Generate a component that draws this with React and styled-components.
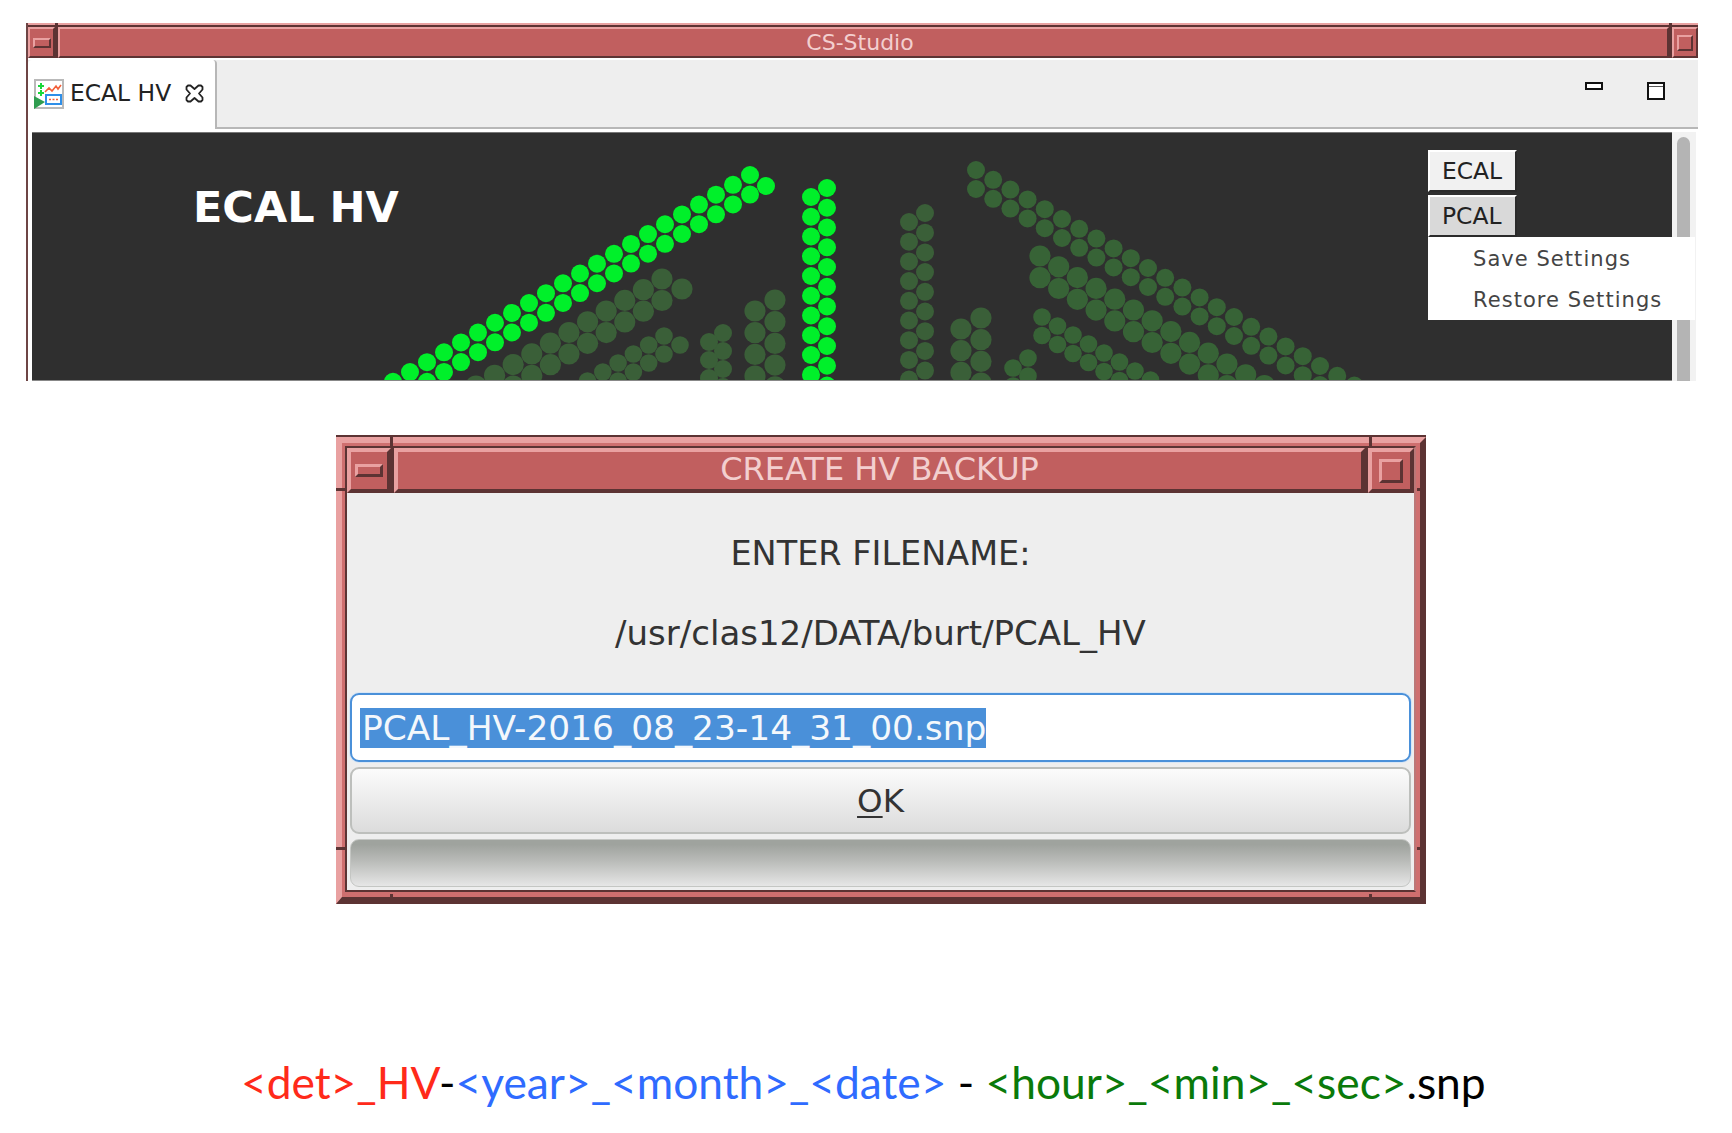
import React from "react";
import styled, { createGlobalStyle } from "styled-components";

const GlobalStyle = createGlobalStyle`
  html, body {
    margin: 0;
    padding: 0;
    background: #fff;
  }
`;

const LIGHT = "#e9a1a1";
const MAIN = "#c15f5f";
const DARK = "#5c3333";
const UI_FONT = `"DejaVu Sans", "Liberation Sans", sans-serif`;

const Page = styled.div`
  width: 1732px;
  height: 1133px;
  padding-top: 23px;
  box-sizing: border-box;
  overflow: hidden;
  font-family: ${UI_FONT};
`;

/* ---- top window ---- */

const TopWindow = styled.div`
  position: relative;
  width: 1672px;
  height: 358px;
  margin-left: 26px;
  box-sizing: border-box;
  display: flex;
  flex-direction: column;
  border-left: 2px solid #6e4545;
`;

const TopBar = styled.div`
  display: flex;
  height: 35px;
  box-sizing: border-box;
  padding-top: 4px;
  background: ${DARK};
  box-shadow: inset 0 2px 0 ${LIGHT};
  margin-bottom: 2px;
`;

const BarButton = styled.div`
  width: ${(p) => p.$width}px;
  flex: none;
  box-sizing: border-box;
  display: flex;
  align-items: center;
  justify-content: center;
  background: ${MAIN};
  border-style: solid;
  border-width: ${(p) => p.$bevel}px;
  border-color: ${LIGHT} ${DARK} ${DARK} ${LIGHT};
`;

const BarTitle = styled.div`
  flex: 1;
  margin-left: ${(p) => p.$gap}px;
  margin-right: ${(p) => p.$gap}px;
  box-sizing: border-box;
  display: flex;
  align-items: center;
  justify-content: center;
  background: ${MAIN};
  color: #f3cfcf;
  font-size: ${(p) => p.$size}px;
  padding: 0 ${(p) => p.$nudgeX || 0}px ${(p) => p.$nudgeY || 0}px 0;
  border-style: solid;
  border-width: ${(p) => p.$bevel}px;
  border-color: ${LIGHT} ${DARK} ${DARK} ${LIGHT};
`;

const MinGlyph = styled.div`
  width: ${(p) => p.$w}px;
  height: ${(p) => p.$h}px;
  box-sizing: border-box;
  border-style: solid;
  border-width: ${(p) => p.$t}px;
  border-color: ${LIGHT} ${DARK} ${DARK} ${LIGHT};
`;

const TabStrip = styled.div`
  height: 69px;
  flex: none;
  display: flex;
  background: #eeeeee;
  border-bottom: 2px solid #b7b7b7;
  box-sizing: border-box;
`;

const Tab = styled.div`
  width: 189px;
  height: 69px;
  flex: none;
  box-sizing: border-box;
  padding: 18px 0 0 6px;
  display: flex;
  gap: 6px;
  background: #fff;
  border-right: 2px solid #b7b7b7;
  border-radius: 4px 4px 0 0;
  font-size: 23.4px;
  color: #222;
`;

const TabLabel = styled.span`
  line-height: 30px;
  width: 109px;
  white-space: nowrap;
`;

const StripTools = styled.div`
  margin-left: auto;
  display: flex;
  align-items: flex-start;
  gap: 44px;
  padding: 22px 33px 0 0;
`;

const MinimizeIcon = styled.div`
  width: 18px;
  height: 8px;
  box-sizing: border-box;
  border: 2px solid #111;
  background: #fff;
`;

const MaximizeIcon = styled.div`
  width: 18px;
  height: 18px;
  box-sizing: border-box;
  border: 2px solid #111;
  background: linear-gradient(#fff 2px, #555 2px, #555 3px, #fff 3px);
`;

const Body = styled.div`
  position: relative;
  flex: 1;
  min-height: 0;
  display: flex;
  padding: 3px 2px 0 4px;
  background: #fff;
`;

const Canvas = styled.div`
  position: relative;
  flex: 1;
  background: #2f2f2f;
  border-top: 1px solid #777;
  border-bottom: 1px solid #888;
  overflow: hidden;
`;

const DotField = styled.svg`
  display: block;
`;

const Heading = styled.h1`
  position: absolute;
  left: 161px;
  top: 49px;
  margin: 0;
  color: #fff;
  font-size: 43px;
  line-height: 50px;
  font-weight: 700;
`;

const ScrollTrack = styled.div`
  width: 24px;
  flex: none;
  background: #f2f2f2;
  padding: 5px 6px 0 5px;
  box-sizing: border-box;
`;

const ScrollThumb = styled.div`
  height: 100%;
  background: #b4b4b4;
  border-radius: 7px 7px 0 0;
`;

const Controls = styled.div`
  position: absolute;
  left: 1400px;
  top: 21px;
  width: 267px;
  display: flex;
  flex-direction: column;
  gap: 3px;
`;

const DisplayButton = styled.div`
  width: 89px;
  height: 42px;
  box-sizing: border-box;
  display: flex;
  align-items: center;
  padding-left: 12px;
  font-size: 23.4px;
  color: #222;
  background: ${(p) => (p.$active ? "#d9d9d9" : "#f1f1f1")};
  border-style: solid;
  border-width: 2px;
  border-color: #fff #2a2a2a #2a2a2a #fff;
`;

const ContextMenu = styled.div`
  margin-top: -3px;
  height: 83px;
  box-sizing: border-box;
  padding: 2px 0 0 45px;
  display: flex;
  flex-direction: column;
  justify-content: center;
  gap: 11px;
  background: #fff;
  font-size: 21px;
  letter-spacing: 1.05px;
  color: #444;
`;

const MenuItem = styled.div`
  line-height: 30px;
`;

/* ---- dialog ---- */

const DialogFrame = styled.div`
  position: relative;
  width: 1090px;
  height: 467px;
  margin: 56px 0 0 336px;
  box-sizing: border-box;
  border-style: solid;
  border-width: 6px 6px 7px 6px;
  border-color: ${LIGHT} ${DARK} ${DARK} ${LIGHT};
  background: #cf6f6f;
  box-shadow: 0 -2px 0 ${DARK};
  padding: 3px 4px 5px 3px;
  display: flex;
`;

const DialogInner = styled.div`
  flex: 1;
  min-width: 0;
  display: flex;
  flex-direction: column;
  border-style: solid;
  border-width: 2px;
  border-color: ${DARK} #b77 ${DARK} ${DARK};
  background: #eeeeee;
`;

const DialogBar = styled.div`
  height: 45px;
  flex: none;
  display: flex;
  background: ${DARK};
`;

const Tick = styled.i`
  position: absolute;
  background: ${DARK};
  width: ${(p) => p.$w}px;
  height: ${(p) => p.$h}px;
  left: ${(p) => p.$x}px;
  top: ${(p) => p.$y}px;
`;

const DialogBody = styled.div`
  flex: 1;
  display: flex;
  flex-direction: column;
  padding: 0 3px 3px 3px;
  text-align: center;
  color: #333;
`;

const PromptLine = styled.div`
  font-size: ${(p) => p.$size}px;
  line-height: 40px;
  margin-top: ${(p) => p.$top}px;
  white-space: nowrap;
`;

const FileInput = styled.div`
  margin-top: 40px;
  height: 69px;
  flex: none;
  box-sizing: border-box;
  border: 2px solid #4a90d9;
  border-radius: 9px;
  background: #fff;
  box-shadow: 0 0 0 1px #d8e6f5;
  display: flex;
  align-items: center;
  padding-left: 8px;
  font-size: 34.4px;
  text-align: left;
`;

const Selected = styled.span`
  background: #4a90d9;
  color: #f4f8fc;
  line-height: 40px;
  white-space: nowrap;
  padding-left: 2px;
`;

const OkButton = styled.div`
  margin-top: 5px;
  height: 67px;
  flex: none;
  box-sizing: border-box;
  border: 2px solid #bdbfbc;
  border-radius: 9px;
  background: linear-gradient(#fbfbfb, #dcdcdc);
  display: flex;
  align-items: center;
  justify-content: center;
  font-size: 32.5px;
`;

const Mnemonic = styled.span`
  text-decoration: underline;
  text-underline-offset: 4px;
  text-decoration-thickness: 2px;
`;

const EmptyBar = styled.div`
  margin-top: 5px;
  height: 48px;
  flex: none;
  box-sizing: border-box;
  border: 1px solid #c4c6c3;
  border-radius: 9px;
  background: linear-gradient(#9fa39e 10%, #b9bbb8 45%, #e6e6e6);
`;

/* ---- caption ---- */

const Caption = styled.div`
  margin: 152px 0 0 241px;
  font-family: Lato, "Open Sans", sans-serif;
  font-size: 44.3px;
  line-height: 52px;
  white-space: pre;
  color: #000;
`;

const Part = styled.span`
  color: ${(p) => p.$color};
`;

/* ---- drawings ---- */

const BRIGHT = "#00f02a";
const DIM = "#3a5f38";
const DIM2 = "#376336";

// pairs of dots walking along a diagonal
function diagonal(x, y, dx, dy, gap, count) {
  const out = [];
  for (let i = 0; i < count; i++) {
    out.push([x + dx * i, y + dy * i]);
    out.push([x + dx * i, y + dy * i + gap]);
  }
  return out;
}

function column(x, y, step, stop = 395) {
  const out = [];
  for (let cy = y; cy < stop; cy += step) out.push([x, cy]);
  return out;
}

const GROUPS = [
  { fill: BRIGHT, r: 9, dots: [...diagonal(750, 175, -17, 9.85, 19.6, 23), [766, 186]] },
  { fill: BRIGHT, r: 9, dots: [...column(827, 188, 19.75), ...column(811, 197, 19.75)] },
  { fill: DIM, r: 10.6, dots: [...diagonal(662, 279, -18.6, 10.7, 21.5, 12), [682, 289]] },
  { fill: DIM, r: 8.8, dots: [...diagonal(664, 336, -15.3, 9, 18, 7), [680, 345]] },
  { fill: DIM, r: 9, dots: [...column(723, 333, 18), ...column(709, 342, 18)] },
  { fill: DIM, r: 10.6, dots: [...column(775, 300, 21.7), ...column(755, 311, 21.7)] },
  { fill: DIM, r: 9, dots: [...column(925, 213, 19.7), ...column(909, 222, 19.7)] },
  { fill: DIM, r: 10.6, dots: [...column(981, 318, 21.7), ...column(961, 329, 21.7)] },
  { fill: DIM2, r: 9, dots: diagonal(976, 170, 17.2, 9.8, 19, 24) },
  { fill: DIM2, r: 10.6, dots: diagonal(1040, 256, 18.7, 10.8, 21.7, 13) },
  { fill: DIM2, r: 8.8, dots: diagonal(1042, 317, 15.5, 9, 18.5, 8) },
  { fill: DIM2, r: 8.8, dots: [...column(1028, 358, 18), ...column(1013, 368, 18)] },
];

function Dots() {
  return (
    <DotField width="1640" height="247" viewBox="32 133 1640 247">
      {GROUPS.map((g, gi) =>
        g.dots.map(([cx, cy], i) => (
          <circle key={`${gi}-${i}`} cx={cx} cy={cy} r={g.r} fill={g.fill} />
        ))
      )}
    </DotField>
  );
}

function TabIcon() {
  return (
    <svg width="30" height="30" viewBox="0 0 30 30" style={{ flex: "none", marginTop: 1 }}>
      <rect x="1" y="1" width="28" height="28" fill="#fff" stroke="#b9b9b9" strokeWidth="2" />
      <path d="M7 4v6M4 7h6M7 11v6M4 14h6" stroke="#19d83a" strokeWidth="2" />
      <path d="M11 13l4-4 3 3 4-5 2 3 3-4" fill="none" stroke="#f2603a" strokeWidth="1.6" />
      <rect x="12" y="16" width="15" height="9" fill="#fff" stroke="#2f8fe8" strokeWidth="2" />
      <path d="M15 20.500h2M18.500 20.500h2M22 20.500h2" stroke="#f2603a" strokeWidth="1.6" />
      <path d="M0 17l11 6-11 7z" fill="#2f9c4f" />
    </svg>
  );
}

function CloseIcon() {
  return (
    <svg width="19" height="19" viewBox="0 0 19 19" style={{ flex: "none", marginTop: 6 }}>
      <path
        d="M3 1.500h2.500L9.500 5 13.500 1.500H16L17.500 3v2.500L14 9.500l3.500 4V16L16 17.500h-2.500L9.500 14l-4 3.500H3L1.500 16v-2.500L5 9.500 1.500 5.500V3z"
        fill="#fff"
        stroke="#222"
        strokeWidth="1.800"
        strokeLinejoin="round"
      />
    </svg>
  );
}

export default function App() {
  return (
    <>
      <GlobalStyle />
      <Page>
        <TopWindow>
          <Tick $x={27} $y={0} $w={3} $h={8} />
          <Tick $x={1641} $y={0} $w={3} $h={8} />
          <TopBar>
            <BarButton $width={27} $bevel={2}>
              <MinGlyph $w={18} $h={10} $t={2} />
            </BarButton>
            <BarTitle $gap={3} $size={22} $bevel={2} $nudgeX={7}>
              CS-Studio
            </BarTitle>
            <BarButton $width={26} $bevel={2}>
              <MinGlyph $w={16} $h={16} $t={2} />
            </BarButton>
          </TopBar>
          <TabStrip>
            <Tab>
              <TabIcon />
              <TabLabel>ECAL HV</TabLabel>
              <CloseIcon />
            </Tab>
            <StripTools>
              <MinimizeIcon />
              <MaximizeIcon />
            </StripTools>
          </TabStrip>
          <Body>
            <Canvas>
              <Dots />
              <Heading>ECAL HV</Heading>
            </Canvas>
            <ScrollTrack>
              <ScrollThumb />
            </ScrollTrack>
            <Controls>
              <DisplayButton>ECAL</DisplayButton>
              <DisplayButton $active>PCAL</DisplayButton>
              <ContextMenu>
                <MenuItem>Save Settings</MenuItem>
                <MenuItem>Restore Settings</MenuItem>
              </ContextMenu>
            </Controls>
          </Body>
        </TopWindow>

        <DialogFrame>
          <Tick $x={48} $y={-6} $w={3} $h={9} />
          <Tick $x={1027} $y={-6} $w={3} $h={9} />
          <Tick $x={-6} $y={45} $w={9} $h={3} />
          <Tick $x={1075} $y={45} $w={9} $h={3} />
          <Tick $x={-6} $y={404} $w={9} $h={3} />
          <Tick $x={1075} $y={404} $w={9} $h={3} />
          <Tick $x={48} $y={451} $w={3} $h={8} />
          <Tick $x={1027} $y={451} $w={3} $h={8} />
          <DialogInner>
            <DialogBar>
              <BarButton $width={44} $bevel={4}>
                <MinGlyph $w={28} $h={13} $t={3} />
              </BarButton>
              <BarTitle $gap={3} $size={32} $bevel={4} $nudgeY={4}>
                CREATE HV BACKUP
              </BarTitle>
              <BarButton $width={46} $bevel={4}>
                <MinGlyph $w={24} $h={24} $t={3} />
              </BarButton>
            </DialogBar>
            <DialogBody>
              <PromptLine $top={41} $size={33.5}>ENTER FILENAME:</PromptLine>
              <PromptLine $top={39} $size={34}>/usr/clas12/DATA/burt/PCAL_HV</PromptLine>
              <FileInput>
                <Selected>PCAL_HV-2016_08_23-14_31_00.snp</Selected>
              </FileInput>
              <OkButton>
                <span>
                  <Mnemonic>O</Mnemonic>K
                </span>
              </OkButton>
              <EmptyBar />
            </DialogBody>
          </DialogInner>
        </DialogFrame>

        <Caption>
          <Part $color="#ff2a1a">{"<det>_HV"}</Part>-
          <Part $color="#2f6bff">{"<year>_<month>_<date>"}</Part>
          {" - "}
          <Part $color="#0a7a0a">{"<hour>_<min>_<sec>"}</Part>
          .snp
        </Caption>
      </Page>
    </>
  );
}
